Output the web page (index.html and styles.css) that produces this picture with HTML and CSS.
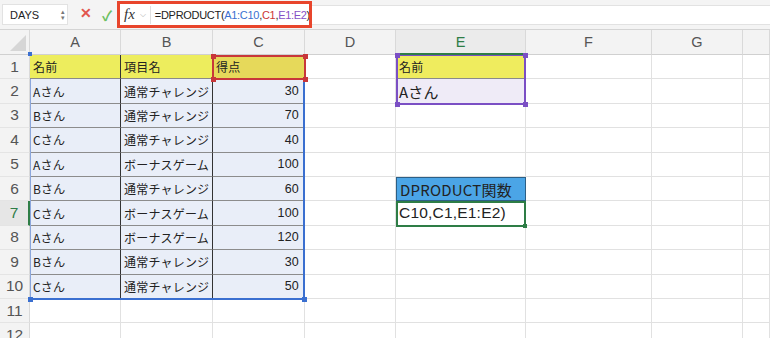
FILE: index.html
```html
<!DOCTYPE html>
<html lang="ja">
<head>
  <meta charset="UTF-8">
  <title>DPRODUCT</title>
  <link rel="stylesheet" href="styles.css">
</head>
<body>

  <!-- formula bar -->
  <div class="toolbar">
    <div class="namebox">
      <span>DAYS</span>
      <span class="spin">▴<br>▾</span>
    </div>
    <div class="btns">
      <span class="cancel">✕</span>
      <span class="ok">✓</span>
    </div>
    <div class="formula">
      <span class="fx">fx</span>
      <span class="chev">⌵</span>
      <span class="ftext">=DPRODUCT(<b class="r-blue">A1:C10</b>,<b class="r-red">C1</b>,<b class="r-purple">E1:E2</b>)<i class="caret"></i></span>
    </div>
    <div class="rest"></div>
  </div>

  <div class="sheet" id="sheet">
    <div class="sel-blue"><i class="h hl"></i><i class="h hr"></i><i class="h tl"></i></div>
    <div class="sel-red"><i class="h tl"></i><i class="h tr"></i><i class="h bl"></i><i class="h br"></i></div>
    <div class="sel-purple"><i class="h tl"></i><i class="h tr"></i><i class="h bl"></i><i class="h br"></i></div>
    <div class="active"><i class="fill"></i></div>
  </div>

  <script>
    var cols = ["A", "B", "C", "D", "E", "F", "G", ""];
    var rows = [
      ["名前", "項目名", "得点"],
      ["Aさん", "通常チャレンジ", 30],
      ["Bさん", "通常チャレンジ", 70],
      ["Cさん", "通常チャレンジ", 40],
      ["Aさん", "ボーナスゲーム", 100],
      ["Bさん", "通常チャレンジ", 60],
      ["Cさん", "ボーナスゲーム", 100],
      ["Aさん", "ボーナスゲーム", 120],
      ["Bさん", "通常チャレンジ", 30],
      ["Cさん", "通常チャレンジ", 50]
    ];
    var extra = {
      "1": ["e-head", "名前"],
      "2": ["e-val", "Aさん"],
      "6": ["e-title", "DPRODUCT関数"],
      "7": ["e-formula", "C10,C1,E1:E2)"]
    };

    var sheet = document.getElementById("sheet");
    var html = '<div class="corner"><i></i></div>';
    cols.forEach(function (c) {
      html += '<div class="colhead' + (c === "E" ? " cur" : "") + '">' + c + '</div>';
    });
    for (var r = 1; r <= 12; r++) {
      html += '<div class="rowhead' + (r === 7 ? " cur" : "") + '">' + r + '</div>';
      var d = rows[r - 1];
      for (var c = 0; c < 8; c++) {
        var cls = "cell", txt = "";
        if (d && c < 3) {
          cls += r === 1 ? " t-head" : " t-body";
          if (r === 1 && c === 2) cls += " t-sel";
          if (c === 2 && r > 1) cls += " num";
          if (c < 2) cls += " t-col";
          txt = d[c];
        }
        if (c === 4 && extra[r]) {
          cls += " " + extra[r][0];
          txt = extra[r][1];
        }
        html += '<div class="' + cls + '">' + txt + '</div>';
      }
    }
    sheet.insertAdjacentHTML("afterbegin", html);
  </script>

</body>
</html>
```

FILE: styles.css
```css
body {
  margin: 0;
  width: 770px;
  height: 338px;
  overflow: hidden;
  background: #fff;
  font-family: "Liberation Sans", "Noto Sans CJK JP", sans-serif;
  color: #222;
}

/* toolbar */
.toolbar {
  height: 30px;
  display: flex;
  align-items: center;
  background: #f4f4f4;
  border-bottom: 1px solid #d4d4d4;
  box-sizing: border-box;
}

.namebox {
  width: 66px;
  height: 21px;
  margin-left: 2px;
  background: #fff;
  border: 1px solid #e2e2e2;
  box-sizing: border-box;
  display: flex;
  align-items: center;
  justify-content: space-between;
  padding: 0 2px 0 7px;
  font-size: 11px;
}

.spin {
  font-size: 7px;
  line-height: 6px;
  color: #777;
  text-align: center;
}

.btns {
  width: 47px;
  display: flex;
  justify-content: space-between;
  padding: 0 0 0 12px;
  font-size: 14px;
  box-sizing: border-box;
}

.cancel { color: #e2554e; font-weight: bold; }
.ok { color: #6cbf62; font-weight: bold; margin-right: 3px; }

.formula {
  width: 195px;
  height: 27px;
  border: 3px solid #e8452c;
  box-sizing: border-box;
  background: #fff;
  display: flex;
  align-items: center;
  margin-left: 2px;
  overflow: hidden;
}

.fx {
  font-family: "Liberation Serif", serif;
  font-style: italic;
  font-size: 15px;
  margin-left: 4px;
  color: #333;
}

.chev {
  font-size: 8px;
  color: #aaa;
  margin: 0 4px 0 5px;
  padding-right: 4px;
  border-right: 1px solid #e0e0e0;
  line-height: 18px;
}

.ftext {
  font-size: 11px;
  letter-spacing: -0.3px;
  color: #222;
  display: flex;
  align-items: center;
  white-space: nowrap;
}

.ftext b { font-weight: normal; }
.r-blue { color: #3a6fd0; }
.r-red { color: #cc3737; }
.r-purple { color: #8650c6; }

.caret {
  width: 1px;
  height: 14px;
  background: #222;
  margin-left: 2px;
}

.rest {
  flex: 1;
  height: 20px;
  background: #fff;
  border-top: 1px solid #e2e2e2;
  border-bottom: 1px solid #e2e2e2;
  box-sizing: border-box;
}

/* sheet grid */
.sheet {
  position: relative;
  display: grid;
  grid-template-columns: 30px 91px 92px 92px 91px 130px 126px 91px 27px;
  grid-template-rows: 25px repeat(12, 24.4px);
}

.corner,
.colhead,
.rowhead {
  background: #f3f3f3;
  color: #555;
  border-right: 1px solid #d9d9d9;
  border-bottom: 1px solid #d0d0d0;
  box-sizing: border-box;
  display: flex;
  align-items: center;
  justify-content: center;
}

.corner {
  position: relative;
}

.corner i {
  position: absolute;
  right: 3px;
  bottom: 3px;
  border-left: 16px solid transparent;
  border-bottom: 16px solid #d6d6d6;
}

.colhead {
  font-size: 14.5px;
}

.colhead.cur {
  background: #ebebeb;
  color: #2e7d46;
  border-bottom: 2px solid #2e7d46;
}

.rowhead {
  font-size: 15.5px;
  color: #555;
  border-bottom: 1px solid #e4e4e4;
}

.rowhead.cur {
  background: #e6e6e6;
  color: #2e7d46;
  border-right: 2px solid #2e7d46;
}

.cell {
  border-right: 1px solid #e1e1e1;
  border-bottom: 1px solid #e1e1e1;
  box-sizing: border-box;
  font-family: "Noto Sans CJK JP", "Liberation Sans", sans-serif;
  font-size: 12px;
  letter-spacing: 0.2px;
  padding: 0 3px;
  display: flex;
  align-items: center;
  white-space: nowrap;
}

.t-head {
  background: #eded5d;
  border-bottom: 1px solid #8a8a8a;
}

.t-head.t-sel {
  background: #e6d95a;
}

.t-body {
  background: #e9eef8;
  border-bottom: 1px solid #8c8c8c;
}

.t-col {
  border-right: 1px solid #333;
}

.num {
  justify-content: flex-end;
  font-family: "Liberation Sans", sans-serif;
  font-size: 12.5px;
  padding-right: 5px;
}

.e-head {
  background: #efec5e;
  border-bottom: 1px solid #8a8a8a;
}

.e-val {
  background: #efebf7;
  font-size: 15px;
}

.e-title {
  background: #4ba5e6;
  font-size: 15px;
  border: 1px solid #2c5f86;
}

.e-formula {
  font-family: "Liberation Sans", sans-serif;
  font-size: 15.5px;
}

/* range outlines (sheet coords: rows start at 25px) */
.sel-blue {
  position: absolute;
  left: 30px;
  top: 49px;
  width: 275px;
  height: 221px;
  border-right: 2px solid #3a6fd0;
  border-bottom: 2px solid #3a6fd0;
  border-left: 1px solid #8aa6dc;
  box-sizing: border-box;
  z-index: 2;
}

.sel-red {
  position: absolute;
  left: 212px;
  top: 25px;
  width: 94px;
  height: 25px;
  border: 2px solid #c8373a;
  box-sizing: border-box;
  z-index: 3;
}

.sel-purple {
  position: absolute;
  left: 396px;
  top: 25px;
  width: 130px;
  height: 50px;
  border: 2px solid #7b4fc4;
  border-top: 1px solid #7b4fc4;
  box-sizing: border-box;
  z-index: 3;
}

.active {
  position: absolute;
  left: 396px;
  top: 171px;
  width: 130px;
  height: 26px;
  border: 2px solid #2e7d46;
  box-sizing: border-box;
  z-index: 3;
}

.h {
  position: absolute;
  width: 5px;
  height: 5px;
}

.sel-red .h { background: #c8373a; }
.sel-purple .h { background: #7b4fc4; }
.sel-blue .h { background: #3a6fd0; }

.h.tl { left: -3px; top: -3px; }
.h.tr { right: -4px; top: -3px; }
.h.bl { left: -3px; bottom: -4px; }
.h.br { right: -4px; bottom: -4px; }
.sel-blue .hl { left: -3px; bottom: -4px; }
.sel-blue .hr { right: -4px; bottom: -4px; }
.sel-blue .tl { left: -3px; top: -27px; width: 4px; height: 4px; }

.fill {
  position: absolute;
  right: -3px;
  bottom: -3px;
  width: 4px;
  height: 4px;
  background: #2e7d46;
}
```
